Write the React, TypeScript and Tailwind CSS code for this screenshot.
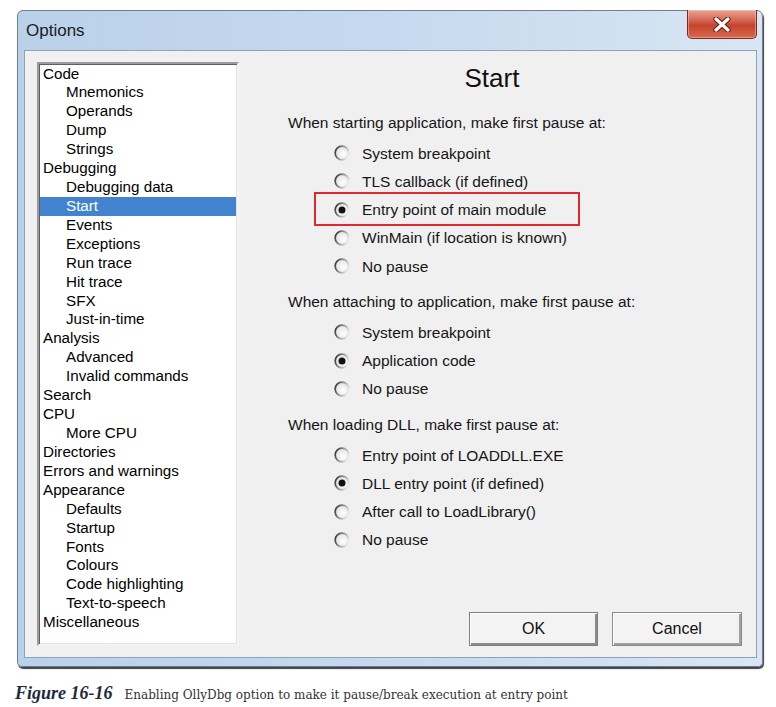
import React from 'react';

const tree: [number, string][] = [
  [0, 'Code'],
  [1, 'Mnemonics'],
  [1, 'Operands'],
  [1, 'Dump'],
  [1, 'Strings'],
  [0, 'Debugging'],
  [1, 'Debugging data'],
  [1, 'Start'],
  [1, 'Events'],
  [1, 'Exceptions'],
  [1, 'Run trace'],
  [1, 'Hit trace'],
  [1, 'SFX'],
  [1, 'Just-in-time'],
  [0, 'Analysis'],
  [1, 'Advanced'],
  [1, 'Invalid commands'],
  [0, 'Search'],
  [0, 'CPU'],
  [1, 'More CPU'],
  [0, 'Directories'],
  [0, 'Errors and warnings'],
  [0, 'Appearance'],
  [1, 'Defaults'],
  [1, 'Startup'],
  [1, 'Fonts'],
  [1, 'Colours'],
  [1, 'Code highlighting'],
  [1, 'Text-to-speech'],
  [0, 'Miscellaneous'],
];

const groups = [
  {
    label: 'When starting application, make first pause at:',
    options: ['System breakpoint', 'TLS callback (if defined)', 'Entry point of main module', 'WinMain (if location is known)', 'No pause'],
    checked: 2,
    mark: 2,
  },
  {
    label: 'When attaching to application, make first pause at:',
    options: ['System breakpoint', 'Application code', 'No pause'],
    checked: 1,
    mark: -1,
  },
  {
    label: 'When loading DLL, make first pause at:',
    options: ['Entry point of LOADDLL.EXE', 'DLL entry point (if defined)', 'After call to LoadLibrary()', 'No pause'],
    checked: 1,
    mark: -1,
  },
];

function Radio({ checked }: { checked?: boolean }) {
  return (
    <svg width="16" height="16" viewBox="0 0 16 16" className="shrink-0">
      <defs>
        <linearGradient id="rdStroke" x1="0" y1="0.2" x2="1" y2="0.6">
          <stop offset="0" stopColor="#333333" />
          <stop offset="0.45" stopColor="#8f8f8f" />
          <stop offset="1" stopColor="#ebebeb" />
        </linearGradient>
        <radialGradient id="rdFill" cx="0.6" cy="0.6" r="0.6">
          <stop offset="0" stopColor="#ffffff" />
          <stop offset="1" stopColor="#e2e2e2" />
        </radialGradient>
      </defs>
      <circle cx="8" cy="8" r="6.8" fill="url(#rdFill)" stroke="url(#rdStroke)" strokeWidth="1.7" />
      {checked && <circle cx="8" cy="8" r="3.5" fill="#111" />}
    </svg>
  );
}

function CloseButton() {
  return (
    <div className="-mt-[1px] mr-[5px] w-[70px] h-[29px] rounded-b-[5px] border border-t-0 border-[#7b2a20] bg-gradient-to-b from-[#e9a596] via-[#c6432d] via-55% to-[#d9694f] flex items-center justify-center shadow-[inset_0_0_0_1px_rgba(255,210,200,0.45)]">
      <svg width="22" height="15" viewBox="0 0 22 15">
        <path d="M5 2 L17 13 M17 2 L5 13" stroke="#5c1d15" strokeWidth="5.2" strokeLinecap="round" />
        <path d="M5 2 L17 13 M17 2 L5 13" stroke="#ffffff" strokeWidth="3.2" strokeLinecap="round" />
      </svg>
    </div>
  );
}

export default function App() {
  return (
    <div className="w-[776px] h-[707px] bg-white overflow-hidden font-['Liberation_Sans',Arial,sans-serif]">
      <div className="pt-[10px] pl-[17px]">
        <div className="w-[746px] h-[657px] rounded-t-[6px] rounded-b-[5px] border border-[#6d7f94] bg-gradient-to-r from-[#bad1ea] via-[#c6d9ee] to-[#d9e6f4] shadow-[1px_2px_1px_rgba(0,0,0,0.75)] flex flex-col">
          {/* title bar */}
          <div className="h-[39px] flex justify-between items-start">
            <div className="pl-[8px] pt-[10px] text-[17px] leading-[20px] text-[#1b1b1b]">Options</div>
            <CloseButton />
          </div>

          {/* client area */}
          <div className="ml-[6px] w-[733px] h-[608px] border border-[#8da2b9] bg-[#f0f0f0] flex">
            <div className="pl-[12px] pt-[11px]">
              <div className="w-[202px] h-[584px] bg-white border-2 border-t-[#9c9c9c] border-l-[#9c9c9c] border-r-[#f4f4f4] border-b-[#f4f4f4] shadow-[inset_1px_1px_0_#5f5f5f,inset_-1px_-1px_0_#e2e2e2] pt-[0.5px] text-[15.2px] text-black">
                {tree.map(([lvl, name], i) => {
                  const sel = name === 'Start';
                  return (
                    <div
                      key={i}
                      className={`h-[18.93px] leading-[18.93px] whitespace-nowrap mx-[1px] ${lvl ? 'pl-[26px]' : 'pl-[3px]'} ${sel ? 'bg-[#4283cf] text-white' : ''}`}
                    >
                      {name}
                    </div>
                  );
                })}
              </div>
            </div>

            <div className="flex-1 flex flex-col">
              <div className="pt-[12px] pr-[11px] h-[42px] text-center text-[26px] leading-[30px] text-[#111]">Start</div>
              <div className="mt-[16px] text-[15.5px] text-[#161616]">
                {groups.map((g, gi) => (
                  <div key={gi} className={gi ? 'mt-[8px]' : ''}>
                    <div className="h-[28px] leading-[28px] pl-[49px] mb-[2px] whitespace-nowrap">{g.label}</div>
                    <div className="pl-[95px]">
                      {g.options.map((o, oi) => (
                        <div key={oi} className="relative h-[28.25px] flex items-center gap-[12px] whitespace-nowrap">
                          <Radio checked={oi === g.checked} />
                          <span>{o}</span>
                          {oi === g.mark && (
                            <div className="absolute -left-[20px] -top-[4px] w-[266px] h-[34px] border-2 border-[#dc2a30]" />
                          )}
                        </div>
                      ))}
                    </div>
                  </div>
                ))}
              </div>

              <div className="mt-auto flex justify-end gap-[14px] pr-[14px] pb-[11px] text-[16px] text-[#111]">
                <div className="w-[129px] h-[34px] flex items-center justify-center bg-[#f3f3f3] border border-[#7e7e7e] shadow-[inset_1px_1px_0_#ffffff,inset_-2px_-2px_0_#8c8c8c]">
                  OK
                </div>
                <div className="w-[130px] h-[34px] flex items-center justify-center bg-[#f3f3f3] border border-[#8a8a8a] shadow-[inset_1px_1px_0_#ffffff,inset_-2px_-2px_0_#a0a0a0]">
                  Cancel
                </div>
              </div>
            </div>
          </div>
        </div>
      </div>

      {/* figure caption */}
      <div className="mt-[13px] pl-[15px] h-[20px] flex items-baseline whitespace-nowrap">
        <span className="font-['Liberation_Serif',serif] font-bold italic text-[18px] text-[#1d2a3b]">Figure 16-16</span>
        <span className="ml-[12px] font-['DejaVu_Serif',serif] text-[12px] text-[#333]">
          Enabling OllyDbg option to make it pause/break execution at entry point
        </span>
      </div>
    </div>
  );
}
